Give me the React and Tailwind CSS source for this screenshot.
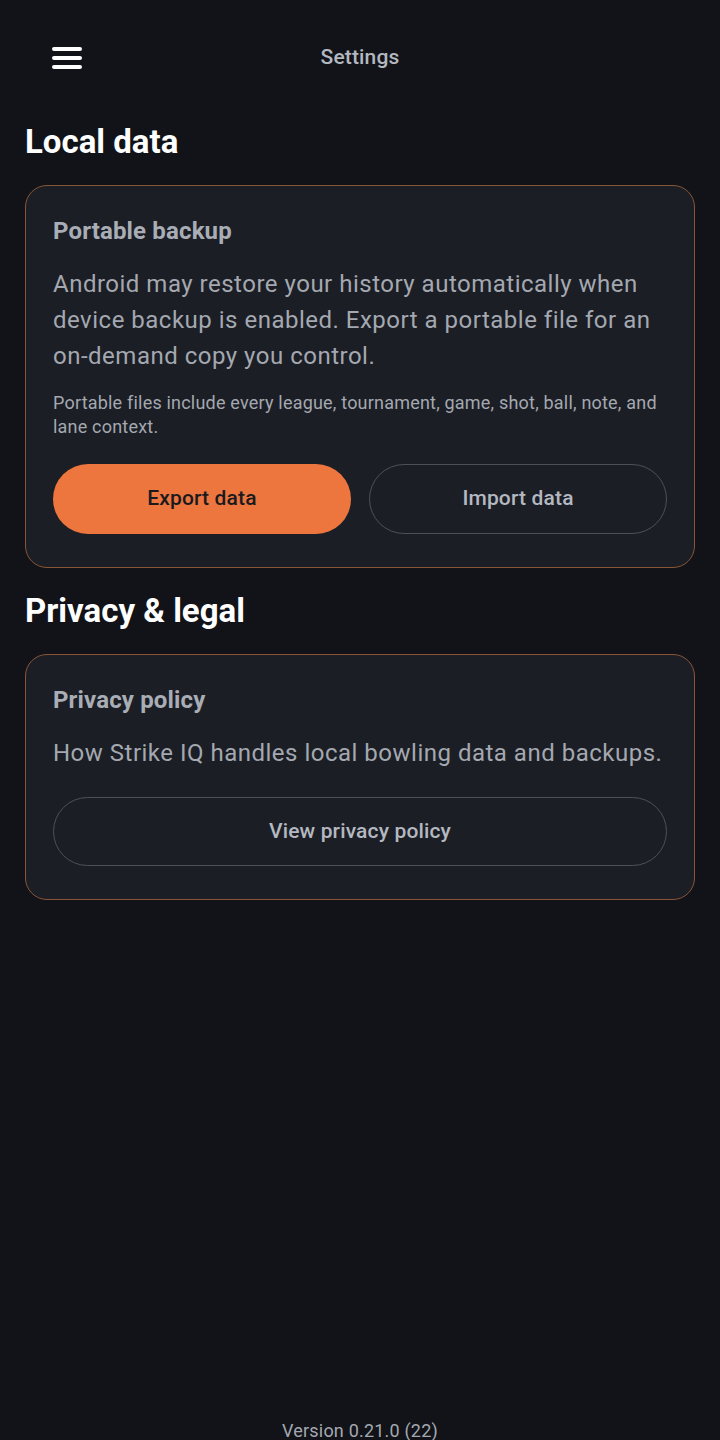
export default function App() {
  return (
    <div className="h-[1440px] overflow-hidden bg-[#111318] flex flex-col font-['Roboto',sans-serif]">
      <header className="relative h-[116px] flex items-center justify-center">
        <button className="absolute left-[52px] top-[47px] flex flex-col gap-[5px]">
          <span className="block w-[30px] h-[4px] rounded-full bg-white" />
          <span className="block w-[30px] h-[4px] rounded-full bg-white" />
          <span className="block w-[30px] h-[4px] rounded-full bg-white" />
        </button>
        <h1 className="text-[21px] font-medium tracking-[0.15px] text-[#b4b8c0]">Settings</h1>
      </header>

      <main className="px-[25px]">
        <h2 className="mt-[6px] text-[33px] leading-[40px] font-bold text-white">Local data</h2>
        <section className="mt-[23px] rounded-[22px] border-[1.5px] border-[#8a5537] bg-[#1b1e25] px-[27px] pt-[30px] pb-[33px]">
          <h3 className="text-[24px] leading-[30px] font-bold tracking-[0.15px] text-[#a9adb5]">Portable backup</h3>
          <p className="mt-[20px] text-[24px] leading-[36px] tracking-[0.5px] text-[#a4a8b0]">
            Android may restore your history automatically when device backup is enabled. Export a portable file for an on-demand copy you control.
          </p>
          <p className="mt-[17px] text-[18px] leading-[24px] tracking-[0.2px] text-[#a4a8b0]">
            Portable files include every league, tournament, game, shot, ball, note, and lane context.
          </p>
          <div className="mt-[25px] grid grid-cols-2 gap-[18px]">
            <button className="h-[70px] rounded-full bg-[#ed763f] text-[21px] font-medium tracking-[0.15px] text-[#1a1a1e]">
              Export data
            </button>
            <button className="h-[70px] rounded-full border-[1.5px] border-[#4d5058] text-[21px] font-medium tracking-[0.15px] text-[#b4b8c0]">
              Import data
            </button>
          </div>
        </section>

        <h2 className="mt-[23px] text-[33px] leading-[40px] font-bold text-white">Privacy &amp; legal</h2>
        <section className="mt-[23px] rounded-[22px] border-[1.5px] border-[#8a5537] bg-[#1b1e25] px-[27px] pt-[30px] pb-[33px]">
          <h3 className="text-[24px] leading-[30px] font-bold tracking-[0.15px] text-[#a9adb5]">Privacy policy</h3>
          <p className="mt-[20px] text-[24px] leading-[36px] tracking-[0.5px] text-[#a4a8b0]">
            How Strike IQ handles local bowling data and backups.
          </p>
          <button className="mt-[26px] w-full h-[69px] rounded-full border-[1.5px] border-[#4d5058] text-[21px] font-medium tracking-[0.15px] text-[#b4b8c0]">
            View privacy policy
          </button>
        </section>
      </main>

      <footer className="mt-auto mb-[-3px] text-center text-[18px] leading-[24px] tracking-[0.2px] text-[#a4a8b0]">
        Version 0.21.0 (22)
      </footer>
    </div>
  )
}
